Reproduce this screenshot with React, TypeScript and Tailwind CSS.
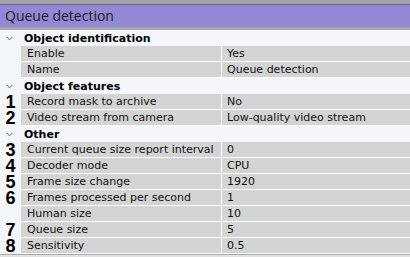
import { ChevronDown } from "lucide-react";

type Row =
  | { kind: "group"; label: string }
  | { kind: "prop"; label: string; value: string; num?: string };

const rows: Row[] = [
  { kind: "group", label: "Object identification" },
  { kind: "prop", label: "Enable", value: "Yes" },
  { kind: "prop", label: "Name", value: "Queue detection" },
  { kind: "group", label: "Object features" },
  { kind: "prop", label: "Record mask to archive", value: "No", num: "1" },
  { kind: "prop", label: "Video stream from camera", value: "Low-quality video stream", num: "2" },
  { kind: "group", label: "Other" },
  { kind: "prop", label: "Current queue size report interval", value: "0", num: "3" },
  { kind: "prop", label: "Decoder mode", value: "CPU", num: "4" },
  { kind: "prop", label: "Frame size change", value: "1920", num: "5" },
  { kind: "prop", label: "Frames processed per second", value: "1", num: "6" },
  { kind: "prop", label: "Human size", value: "10" },
  { kind: "prop", label: "Queue size", value: "5", num: "7" },
  { kind: "prop", label: "Sensitivity", value: "0.5", num: "8" },
];

export default function App() {
  return (
    <div className="w-[410px] h-[257px] overflow-hidden bg-[#f3f6fa] flex flex-col font-['DejaVu_Sans',sans-serif] text-[11px] text-[#111]">
      {/* title bar */}
      <div className="h-[4px] bg-[#a4a2ab]" />
      <div className="h-[1px] bg-[#6e6a80]" />
      <div className="h-[22px] bg-[#9488d6] flex items-center pl-[5px] font-['Open_Sans',sans-serif] text-[14px] leading-none text-[#1a1a1a]">
        Queue detection
      </div>
      <div className="h-[3px] bg-[#a9a7b0]" />

      {/* property grid */}
      <div className="flex flex-col">
        {rows.map((r, i) =>
          r.kind === "group" ? (
            <div key={i} className="h-[16px] flex items-center">
              <div className="w-[21px] flex justify-center">
                <ChevronDown size={11} strokeWidth={2} className="text-[#555] ml-[-3px]" />
              </div>
              <span className="pl-[3px] font-bold text-[11px] leading-none text-black">{r.label}</span>
            </div>
          ) : (
            <div key={i} className="h-[16px] flex">
              <div className="w-[21px] h-[16px] flex items-center justify-center font-['Liberation_Sans',sans-serif] font-bold text-[18px] leading-[16px] text-black">
                {r.num ?? ""}
              </div>
              <div className="flex-1 flex border-b border-white bg-[#d4d4d4]">
                <div className="w-[201px] pl-[6px] flex items-center whitespace-nowrap overflow-hidden border-r border-white leading-none">
                  {r.label}
                </div>
                <div className="flex-1 pl-[5px] flex items-center whitespace-nowrap leading-none">
                  {r.value}
                </div>
              </div>
            </div>
          )
        )}
      </div>
      <div className="h-[1px] bg-[#a8a8a8]" />
      <div className="flex-1 bg-[#e2e2e2]" />
    </div>
  );
}
